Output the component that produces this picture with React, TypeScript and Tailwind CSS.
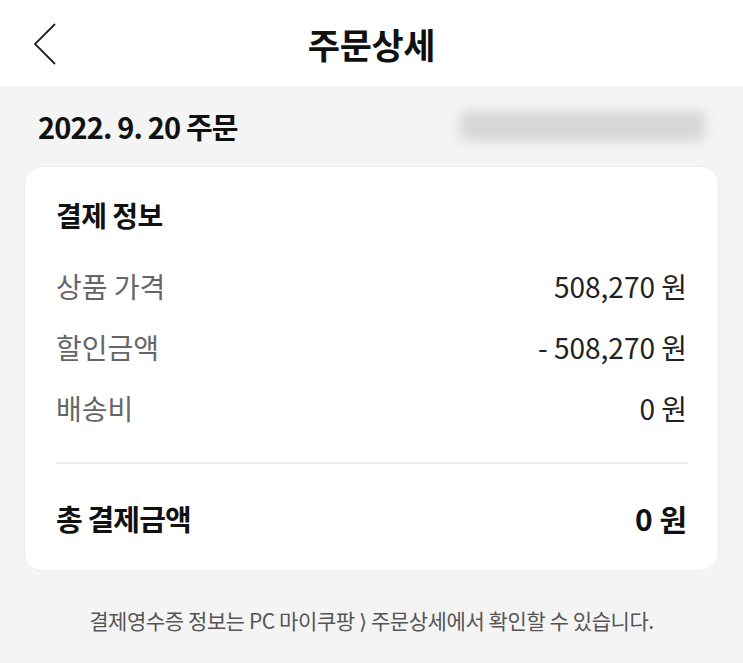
import React from 'react'

const rows = [
  { label: '상품 가격', value: '508,270 원' },
  { label: '할인금액', value: '- 508,270 원' },
  { label: '배송비', value: '0 원' },
]

export default function App() {
  return (
    <div
      className="min-h-[663px] w-[743px] bg-[#f4f4f4] text-[#111]"
      style={{ fontFamily: '"Noto Sans CJK KR", "Liberation Sans", sans-serif' }}
    >
      {/* 헤더 */}
      <div className="relative flex h-[86px] items-center justify-center bg-white">
        <svg
          className="absolute left-[32px] top-[22px]"
          width="26"
          height="44"
          viewBox="0 0 26 44"
          fill="none"
        >
          <path d="M23 2 L3 22 L23 42" stroke="#222" strokeWidth="1.8" strokeLinejoin="miter" />
        </svg>
        <h1 className="text-[35px] font-bold tracking-[-0.01em] leading-none">주문상세</h1>
      </div>

      {/* 주문일 */}
      <div className="flex h-[80px] items-center justify-between pl-[38px] pr-[38px]">
        <div className="text-[29px] font-bold tracking-[-0.03em] leading-none">2022. 9. 20 주문</div>
        <div className="h-[30px] w-[245px] rounded-md bg-[#d6d6d6] blur-[6px]" />
      </div>

      {/* 결제 정보 카드 */}
      <div className="mx-[24px] rounded-[18px] border border-[#ededed] bg-white px-[31px] pb-[34px] pt-[30px]">
        <div className="text-[28px] font-bold tracking-[-0.02em] leading-[36px]">결제 정보</div>
        <div className="mt-[35px] flex flex-col gap-[25px]">
          {rows.map((r) => (
            <div key={r.label} className="flex items-center justify-between leading-[36px]">
              <span className="text-[28px] text-[#666]">{r.label}</span>
              <span className="text-[28px] text-[#222]">{r.value}</span>
            </div>
          ))}
        </div>
        <div className="mt-[36px] h-[2px] bg-[#eeeeee]" />
        <div className="mt-[36px] flex items-center justify-between leading-[36px]">
          <span className="text-[29px] font-bold tracking-[-0.03em]">총 결제금액</span>
          <span className="text-[30px] font-bold">0 원</span>
        </div>
      </div>

      <p className="mt-[34px] text-center text-[21px] tracking-[-0.02em] text-[#555]">
        결제영수증 정보는 PC 마이쿠팡{' '}
        <span className="font-['DejaVu_Sans',sans-serif] font-light">⟩</span> 주문상세에서 확인할 수 있습니다.
      </p>
    </div>
  )
}
